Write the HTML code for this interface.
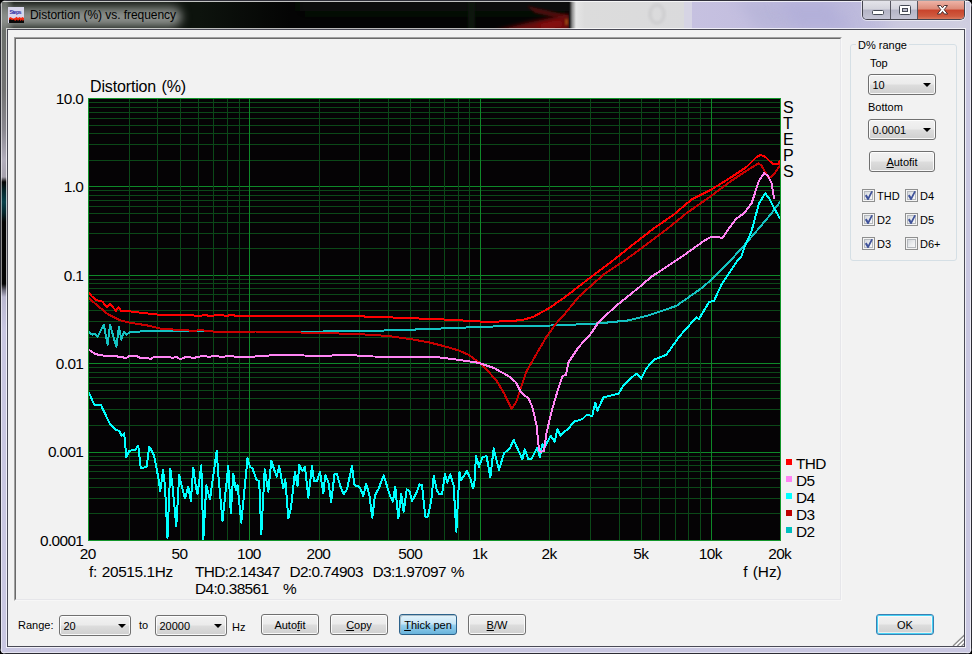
<!DOCTYPE html>
<html>
<head>
<meta charset="utf-8">
<title>Distortion (%) vs. frequency</title>
<style>
html,body{margin:0;padding:0;}
body{width:972px;height:654px;overflow:hidden;position:relative;background:#000;font-family:"Liberation Sans",Arial,sans-serif;font-size:11px;color:#000;}
#win{position:absolute;left:0;top:0;width:972px;height:654px;box-sizing:border-box;border-radius:7px 7px 6px 6px;overflow:hidden;background:#c9c7e1;}
#win div{position:absolute;box-sizing:border-box;}
/* title bar pieces */
.tglowbg{left:0;top:0;width:300px;height:30px;background:linear-gradient(90deg,#0d130d 0,#0d130d 200px,rgba(4,4,4,0) 290px);}
.tglow{left:-8px;top:6px;width:190px;height:21px;border-radius:11px;background:linear-gradient(180deg,#6e726e 0,#909490 50%,#888c88 100%);filter:blur(5px);}
.tglow2{left:0;top:0;width:14px;height:30px;background:linear-gradient(90deg,#6b6f6b 0,#6b6f6b 6px,rgba(107,111,107,0) 14px);}
.ttop{left:0;top:0;width:972px;height:2px;background:linear-gradient(180deg,#30303a 0,#30303a 1px,rgba(255,255,255,.75) 1px,rgba(255,255,255,.75) 2px);}
.lframe{left:0;top:30px;width:8px;height:624px;background:linear-gradient(180deg,#6b6f6b 0px,#727272 60px,#8a8890 100px,#b2aebc 130px,#a6a2ae 147px,#050505 152px,#05262c 161px,#07404a 172px,#05262c 183px,#050505 192px,#050505 254px,#6a6878 260px,#bab8d1 267px,#c9c7e1 300px);}
.ledge{left:0;top:0;width:2px;height:654px;background:linear-gradient(90deg,#2c2c34 0,#2c2c34 1px,rgba(255,255,255,.55) 1px);}
.redge{left:970px;top:0;width:2px;height:654px;background:linear-gradient(90deg,rgba(255,255,255,.6) 0,rgba(255,255,255,.6) 1px,#2c2c34 1px);}
.bedge{left:0;top:652px;width:972px;height:2px;background:linear-gradient(180deg,rgba(255,255,255,.5) 0,rgba(255,255,255,.5) 1px,#2c2c34 1px);}
#icon{left:8px;top:7px;width:16px;height:16px;}
#title{left:30px;top:7px;height:16px;line-height:16px;font-size:12px;white-space:nowrap;color:#000;letter-spacing:-0.05px;}
/* caption buttons */
#caps{left:862px;top:1px;width:103px;height:19px;border:1px solid #44444e;border-top:none;border-radius:0 0 5px 5px;overflow:hidden;box-shadow:0 0 0 1px rgba(255,255,255,.55);}
#caps .b{top:0;height:18px;}
.bmin{left:0;width:28px;background:linear-gradient(180deg,#e4e4ea 0,#d3d3dc 45%,#b4b4c6 50%,#c4c4d4 100%);border-right:1px solid #55555f;}
.bmax{left:28px;width:27px;background:linear-gradient(180deg,#e4e4ea 0,#d3d3dc 45%,#b4b4c6 50%,#c4c4d4 100%);border-right:1px solid #55555f;}
.bclose{left:55px;width:46px;background:linear-gradient(180deg,#eeb3a6 0,#dc8a78 45%,#c8432b 50%,#cf5a3f 85%,#d97a5e 100%);}
/* client */
#client{left:8px;top:30px;width:956px;height:616px;background:#f2f2f2;box-shadow:0 0 0 1px #4a4a56,0 0 0 2px rgba(255,255,255,.72);}
#panel{left:14px;top:37px;width:828px;height:564px;border-top:1px solid #a0a0a0;border-left:1px solid #a0a0a0;border-right:1px solid #f7f7f7;border-bottom:1px solid #f7f7f7;}
#panel i{position:absolute;left:0;top:0;right:0;bottom:0;border-top:1px solid #696969;border-left:1px solid #696969;border-right:1px solid #e6e6ea;border-bottom:1px solid #e6e6ea;}
.chart{position:absolute;left:0;top:0;}
/* controls */
.lbl{white-space:nowrap;height:14px;line-height:14px;}
.btn{border:1px solid #707070;border-radius:3px;background:linear-gradient(180deg,#f2f2f2 0,#ebebeb 48%,#dddddd 52%,#cfcfcf 100%);box-shadow:inset 0 0 0 1px rgba(255,255,255,.85);text-align:center;white-space:nowrap;}
.btn.on{border-color:#2c628b;background:linear-gradient(180deg,#e5f4fc 0,#c4e5f6 48%,#98d1ef 52%,#68b3db 100%);box-shadow:inset 1px 1px 0 0 rgba(158,176,186,.8);}
.btn.def{border-color:#3c7fb1;box-shadow:inset 0 0 0 1px #46d2f5,inset 0 0 0 2px rgba(255,255,255,.6);}
.btn u{text-decoration:underline;}
.combo{border:1px solid #707070;border-radius:3px;background:linear-gradient(180deg,#f2f2f2 0,#ebebeb 48%,#dddddd 52%,#cfcfcf 100%);box-shadow:inset 0 0 0 1px rgba(255,255,255,.85);white-space:nowrap;padding-left:3.5px;}
.combo:after{content:"";position:absolute;right:4px;top:8px;border-left:4px solid transparent;border-right:4px solid transparent;border-top:4px solid #000;}
#group{left:850px;top:44px;width:107px;height:217px;border:1px solid #d5dfe5;border-radius:3px;}
#glabel{left:856px;top:38px;padding:0 2px;background:#f2f2f2;}
.cb{width:13px;height:13px;border:1px solid #8e8f8f;background:linear-gradient(135deg,#c9cdd3 0,#eceef0 55%,#fff 100%);box-shadow:inset 0 0 0 1px #f4f4f4, inset 0 0 0 2px #b4b8bd;}
.cb svg{position:absolute;left:1px;top:1px;}
</style>
</head>
<body>
<div id="win">
  <svg class="tbg" style="position:absolute;left:0;top:0" width="972" height="30" viewBox="0 0 972 30">
    <defs>
      <filter id="bl2" x="-20%" y="-50%" width="140%" height="200%"><feGaussianBlur stdDeviation="2"/></filter>
      <filter id="bl1" x="-20%" y="-50%" width="140%" height="200%"><feGaussianBlur stdDeviation="1.2"/></filter>
      <filter id="bl6" x="-20%" y="-100%" width="140%" height="300%"><feGaussianBlur stdDeviation="7"/></filter>
      <linearGradient id="edge" x1="0" x2="1"><stop offset="0" stop-color="#050505"/><stop offset=".45" stop-color="#8c8c8c"/><stop offset="1" stop-color="#e6e6e6"/></linearGradient>
      <linearGradient id="grey" x1="0" x2="1"><stop offset="0" stop-color="#e6e6e6"/><stop offset=".08" stop-color="#dcdcdc"/><stop offset="1" stop-color="#dadadc"/></linearGradient>
      <linearGradient id="lav" x1="0" x2="1"><stop offset="0" stop-color="#c6c1e0"/><stop offset=".2" stop-color="#c3bedf"/><stop offset=".55" stop-color="#bcb9dc"/><stop offset="1" stop-color="#cccadf"/></linearGradient>
    </defs>
    <rect width="972" height="30" fill="#c9c7e1"/>
    <rect x="0" y="0" width="570" height="30" fill="#040404"/>
    <rect x="300" y="0" width="270" height="12" fill="#0b170d" filter="url(#bl6)"/>
    <rect x="468" y="2" width="7" height="28" fill="#0c160e" filter="url(#bl1)"/>
    <polygon points="527,6 568,15 568,20 535,13" fill="#4a0a0a" filter="url(#bl1)"/>
    <polygon points="494,31 530,22 569,14 570,31" fill="#6a0909" filter="url(#bl2)"/>
    <polygon points="536,25 560,20 564,26 545,29" fill="#8a1010" filter="url(#bl2)"/>
    <rect x="565" y="19" width="3" height="6" fill="#9a4a10" filter="url(#bl1)"/>
    <rect x="569" y="0" width="7" height="30" fill="url(#edge)"/>
    <rect x="576" y="0" width="108" height="30" fill="url(#grey)"/>
    <ellipse cx="657" cy="14" rx="7" ry="9" fill="none" stroke="#d0d0d2" stroke-width="4" filter="url(#bl1)"/>
    <rect x="684" y="0" width="8" height="30" fill="#d6d4e4"/>
    <rect x="692" y="0" width="280" height="30" fill="url(#lav)"/>
    <polygon points="735,0 775,0 800,30 760,30" fill="#b6b4d8" opacity=".8" filter="url(#bl6)"/>
    <polygon points="775,0 830,0 850,30 795,30" fill="#b0add8" opacity=".8" filter="url(#bl6)"/>
    <polygon points="880,20 972,20 972,30 895,30" fill="#d6d5e2" opacity=".9" filter="url(#bl6)"/>
  </svg>
  <div class="tglowbg"></div>
  <div class="tglow2"></div>
  <div class="tglow"></div>
  <div class="lframe"></div>
  <div class="ttop"></div>
  <div class="ledge"></div>
  <div class="redge"></div>
  <div class="bedge"></div>
  <div id="icon"><svg width="16" height="16" viewBox="0 0 16 16"><rect width="16" height="16" fill="#d8d6ec"/><rect x="1" y="12" width="15" height="4" fill="#0a0a0a"/><path d="M1 11L2.5 10L4 11L5.5 11.5L7 11L8.5 9.8L10 11L11.5 10L13 11L14.5 10L16 11V13L14.7 14L14 12.5L12.5 14L11.5 12.3L10 14L9 12.5L7 14L6 12.5L4 13L2.5 12.3L1 13Z" fill="#f42a10"/><text x="1.5" y="7.3" font-family="'Liberation Sans',sans-serif" font-size="5.4" font-weight="bold" fill="#2c2ca0" textLength="12">Steps</text></svg></div>
  <div id="title">Distortion (%) vs. frequency</div>
  <div id="caps">
    <div class="b bmin"><svg width="27" height="18"><rect x="9.5" y="9.5" width="11" height="4" rx="1" fill="#fff" stroke="#454a55"/></svg></div>
    <div class="b bmax"><svg width="26" height="18"><rect x="8.5" y="4.5" width="11" height="9" rx="1" fill="#fff" stroke="#454a55"/><rect x="11.5" y="7.5" width="5" height="3" fill="#b9b9c9" stroke="#454a55"/></svg></div>
    <div class="b bclose"><svg width="47" height="18"><path d="M19.5 4.5h3.2l1.8 2.3l1.8-2.3h3.2l-3.3 4.2l3.5 4.3h-3.3l-1.9-2.5l-1.9 2.5h-3.3l3.5-4.3z" fill="#fff" stroke="#4a3030" stroke-width="1" stroke-linejoin="round"/></svg></div>
  </div>
  <div id="client"></div>
  <div id="panel"><i></i></div>
<svg class="chart" width="972" height="654" viewBox="0 0 972 654">
<rect x="88" y="98" width="693" height="443" fill="#050305"/>
<path d="M88 160.5H781M88 144.5H781M88 133.5H781M88 125.5H781M88 118.5H781M88 112.5H781M88 107.5H781M88 102.5H781M88 248.5H781M88 233.5H781M88 222.5H781M88 213.5H781M88 206.5H781M88 200.5H781M88 195.5H781M88 190.5H781M88 337.5H781M88 321.5H781M88 310.5H781M88 301.5H781M88 294.5H781M88 288.5H781M88 283.5H781M88 279.5H781M88 425.5H781M88 409.5H781M88 398.5H781M88 390.5H781M88 383.5H781M88 377.5H781M88 372.5H781M88 367.5H781M88 513.5H781M88 498.5H781M88 487.5H781M88 478.5H781M88 471.5H781M88 465.5H781M88 460.5H781M88 456.5H781" stroke="#0b4818" stroke-width="1" fill="none" shape-rendering="crispEdges"/>
<path d="M88 186.5H781M88 275.5H781M88 363.5H781M88 452.5H781" stroke="#0e8828" stroke-width="1" fill="none" shape-rendering="crispEdges"/>
<path d="M129.5 98V541M157.5 98V541M180.5 98V541M198.5 98V541M213.5 98V541M227.5 98V541M239.5 98V541M319.5 98V541M359.5 98V541M388.5 98V541M410.5 98V541M429.5 98V541M444.5 98V541M458.5 98V541M469.5 98V541M549.5 98V541M590.5 98V541M619.5 98V541M641.5 98V541M659.5 98V541M675.5 98V541M688.5 98V541M700.5 98V541" stroke="#0b4818" stroke-width="1" fill="none" shape-rendering="crispEdges"/>
<path d="M249.5 98V541M480.5 98V541M711.5 98V541" stroke="#0e8828" stroke-width="1" fill="none" shape-rendering="crispEdges"/>
<rect x="88.5" y="98.5" width="692" height="442" fill="none" stroke="#12962a" stroke-width="1" shape-rendering="crispEdges"/>
<clipPath id="pc"><rect x="89" y="99" width="691" height="441"/></clipPath>
<g clip-path="url(#pc)" fill="none" stroke-width="2" stroke-linejoin="round" stroke-linecap="round" shape-rendering="crispEdges">
<polyline stroke="#14c2c2" points="88.5,332.0 92.5,334.7 95.0,333.5 97.5,336.7 103.8,324.7 107.6,344.7 110.0,324.7 116.4,347.0 118.9,326.7 121.4,339.7 123.9,332.0 126.4,334.7 130.0,332.2 147.7,331.0 200.0,331.5 323.0,331.5 368.0,331.0 410.8,329.7 461.0,327.7 496.0,326.4 523.6,326.4 566.0,325.0 598.6,323.4 628.7,320.4 648.7,315.4 676.3,305.9 701.4,288.3 711.4,279.6 729.0,262.0 741.5,248.5 756.6,231.0 771.6,213.3 780.0,202.0"/>
<polyline stroke="#c80000" points="88.5,297.0 92.0,301.0 96.0,304.2 107.7,314.2 119.3,320.0 129.3,322.5 149.3,325.8 161.0,328.7 176.0,329.7 194.3,330.8 202.7,330.0 206.0,331.2 224.3,332.0 248.0,332.0 255.5,331.5 323.0,333.0 360.6,334.2 388.2,336.0 410.8,339.2 428.3,342.2 443.4,346.0 458.4,350.3 468.4,354.8 481.0,363.6 496.0,379.9 503.6,392.4 511.6,408.7 516.0,402.4 521.0,387.4 526.0,372.3 536.0,354.8 546.2,337.2 556.2,323.4 566.0,312.5 578.5,297.0 591.0,285.8 603.6,274.5 622.4,262.0 641.2,248.5 666.3,229.6 686.4,213.3 711.4,195.8 731.5,180.7 746.5,170.7 758.4,163.4 761.6,165.7 764.5,171.0 768.3,177.2 772.0,176.4 776.6,170.7 780.0,165.0"/>
<polyline stroke="#00ffff" points="89.2,393.3 94.2,404.7 100.8,404.7 110.0,424.2 115.8,430.0 119.2,430.8 121.7,435.8 124.2,433.3 126.3,457.5 129.2,450.8 135.0,450.0 138.3,445.8 140.8,468.3 146.7,466.7 149.2,446.7 150.0,447.7 154.2,456.0 158.3,477.7 160.3,491.0 163.0,470.2 165.0,486.0 167.5,537.7 170.3,468.5 172.5,486.0 176.3,526.0 179.2,475.2 181.7,486.0 185.0,498.5 188.3,486.8 190.8,501.0 193.3,467.7 195.8,486.0 197.5,494.3 201.3,465.2 203.3,539.3 206.3,485.2 210.0,499.3 216.7,451.0 218.3,474.3 222.5,521.0 228.3,466.0 230.8,513.5 233.3,473.5 235.8,490.2 237.5,485.2 241.3,522.7 247.5,458.5 250.0,466.8 252.5,468.5 256.7,480.2 259.2,481.0 261.3,534.3 264.7,469.3 268.3,491.8 271.3,461.0 276.7,476.8 279.2,466.0 283.3,488.5 285.3,479.3 288.3,518.5 290.8,509.3 295.0,471.8 297.5,486.0 299.2,465.2 302.5,471.0 305.0,466.8 308.3,497.7 312.0,466.0 314.0,481.0 317.0,481.0 320.0,471.8 323.3,493.5 325.3,475.2 328.3,481.8 331.2,501.8 334.5,474.3 337.0,474.3 340.3,486.0 343.7,494.3 347.0,489.3 352.0,466.0 354.5,485.2 359.5,486.8 363.3,496.0 366.2,483.5 369.5,496.0 372.3,517.7 375.0,495.2 378.7,488.5 383.7,475.2 387.0,486.0 390.3,496.8 392.8,501.8 395.3,486.8 398.3,518.5 401.2,494.3 403.7,511.8 406.7,489.3 409.5,491.0 412.0,501.0 416.2,493.5 419.5,484.3 422.0,485.2 425.3,516.8 427.8,516.8 431.2,501.0 433.7,476.0 437.0,491.0 439.5,494.3 442.0,494.3 445.0,474.3 447.3,482.7 450.3,474.3 453.7,486.0 456.3,531.8 459.5,471.8 461.2,480.2 467.0,471.0 470.3,478.5 472.8,488.5 474.3,484.0 476.0,455.8 479.0,466.7 482.3,457.5 486.5,455.8 490.3,477.5 493.7,448.3 499.0,470.0 504.0,453.3 509.8,448.3 513.7,440.0 522.3,459.2 524.8,449.2 528.2,459.2 531.5,459.2 537.3,447.5 539.8,457.5 542.3,444.2 544.0,448.3 550.7,435.8 554.8,441.7 557.3,429.2 560.7,435.8 564.8,430.8 567.3,430.0 574.0,421.7 582.3,419.2 586.5,415.0 592.3,415.8 595.3,402.5 597.3,410.8 602.3,400.0 603.6,397.4 618.7,393.6 623.7,384.9 636.2,373.6 641.2,378.6 646.2,368.6 653.8,359.8 666.3,354.8 678.8,337.2 696.4,317.2 698.9,319.2 709.0,302.0 714.0,300.9 721.5,284.6 736.5,262.0 741.5,256.0 744.0,248.5 751.6,231.0 759.0,203.3 765.3,193.3 769.1,198.3 774.1,208.3 780.0,218.4"/>
<polyline stroke="#ff84f4" points="88.5,349.5 92.0,352.0 96.0,354.2 104.3,355.8 121.0,356.7 126.0,358.3 129.3,355.8 136.0,355.8 139.3,357.5 151.0,358.7 154.3,356.7 169.3,357.0 172.7,358.0 176.0,356.7 180.2,359.2 186.0,357.0 194.3,357.8 202.7,355.8 209.3,357.0 212.7,355.8 222.7,357.0 227.7,355.8 236.0,356.7 248.0,357.0 255.5,356.5 278.0,354.8 323.0,356.0 345.6,354.8 373.2,356.5 405.7,356.8 438.3,357.3 458.4,359.8 478.5,362.8 493.5,367.8 508.6,376.1 516.0,382.4 521.0,392.4 528.6,398.7 532.3,406.7 536.5,425.0 539.0,450.0 540.7,452.0 544.0,450.8 546.5,433.3 550.7,415.0 554.8,400.0 558.7,387.4 562.5,376.0 566.0,374.8 568.5,362.3 578.5,347.3 591.0,333.5 598.6,322.2 616.0,305.9 641.0,285.8 651.0,277.0 673.8,262.0 686.4,253.5 703.9,240.9 711.4,236.7 722.7,237.7 729.0,228.4 736.5,218.4 744.0,213.3 751.6,203.3 759.0,180.7 764.0,173.2 767.9,175.7 771.6,183.3 774.0,198.3"/>
<polyline stroke="#ff0000" points="88.5,292.5 92.0,296.5 96.0,300.0 102.7,301.7 106.8,307.5 110.2,304.2 116.0,310.8 118.5,307.5 121.0,310.8 129.3,311.3 139.3,312.5 161.0,315.0 192.7,315.0 196.0,316.2 206.0,315.0 209.3,316.2 217.7,315.0 227.7,315.8 230.2,314.7 236.0,315.8 248.0,315.8 323.0,315.9 355.6,316.2 398.2,317.7 448.4,319.7 483.5,321.7 508.6,321.4 523.6,319.7 533.6,316.7 548.7,308.4 566.0,296.3 591.0,277.0 611.0,262.0 631.2,246.0 653.8,228.4 673.8,214.6 691.4,199.6 711.4,189.5 731.5,177.0 746.5,167.0 756.6,156.9 760.6,155.0 765.3,156.9 772.9,164.2 777.9,164.4 780.0,161.0"/>
</g>
<g font-family="'Liberation Sans', Arial, sans-serif" fill="#000" letter-spacing="-0.62" word-spacing="1.2">
<text x="90" y="91.7" font-size="16" letter-spacing="-0.15">Distortion (%)</text>
<text x="83.3" y="103.8" font-size="15.4" text-anchor="end">10.0</text>
<text x="83.3" y="192.2" font-size="15.4" text-anchor="end">1.0</text>
<text x="83.3" y="280.6" font-size="15.4" text-anchor="end">0.1</text>
<text x="83.3" y="369.0" font-size="15.4" text-anchor="end">0.01</text>
<text x="83.3" y="457.4" font-size="15.4" text-anchor="end">0.001</text>
<text x="83.3" y="545.8" font-size="15.4" text-anchor="end">0.0001</text>
<text x="87.7" y="559" font-size="15.4" text-anchor="middle">20</text>
<text x="179.5" y="559" font-size="15.4" text-anchor="middle">50</text>
<text x="248.9" y="559" font-size="15.4" text-anchor="middle">100</text>
<text x="318.4" y="559" font-size="15.4" text-anchor="middle">200</text>
<text x="410.2" y="559" font-size="15.4" text-anchor="middle">500</text>
<text x="479.6" y="559" font-size="15.4" text-anchor="middle">1k</text>
<text x="549.0" y="559" font-size="15.4" text-anchor="middle">2k</text>
<text x="640.8" y="559" font-size="15.4" text-anchor="middle">5k</text>
<text x="710.3" y="559" font-size="15.4" text-anchor="middle">10k</text>
<text x="779.7" y="559" font-size="15.4" text-anchor="middle">20k</text>
<text x="89" y="576.7" font-size="15.4" letter-spacing="-0.4">f: 20515.1Hz</text>
<text x="195" y="576.7" font-size="15.4" xml:space="preserve">THD:2.14347  D2:0.74903  D3:1.97097 %</text>
<text x="195" y="593.5" font-size="15.4" xml:space="preserve">D4:0.38561   %</text>
<text x="743.3" y="576.7" font-size="15.4" letter-spacing="-0.1">f (Hz)</text>
<rect x="786" y="459" width="6" height="6" fill="#ff0000"/>
<text x="796" y="468.7" font-size="15.4">THD</text>
<rect x="786" y="476" width="6" height="6" fill="#ff84f4"/>
<text x="796" y="485.7" font-size="15.4">D5</text>
<rect x="786" y="493" width="6" height="6" fill="#00ffff"/>
<text x="796" y="502.7" font-size="15.4">D4</text>
<rect x="786" y="510" width="6" height="6" fill="#c00000"/>
<text x="796" y="519.7" font-size="15.4">D3</text>
<rect x="786" y="527" width="6" height="6" fill="#00bebe"/>
<text x="796" y="536.7" font-size="15.4">D2</text>
</g>
</svg>
  <div id="steps" style="left:783px;top:99.5px;width:12px;font-size:16px;line-height:16px;word-break:break-all;overflow-wrap:anywhere;white-space:normal;">STEPS</div>
  <div id="group"></div>
  <div id="glabel" class="lbl">D% range</div>
  <div class="lbl" style="left:870px;top:56px;">Top</div>
  <div class="combo" style="left:868px;top:74px;width:68px;height:21px;line-height:20px;">10</div>
  <div class="lbl" style="left:868px;top:100px;">Bottom</div>
  <div class="combo" style="left:868px;top:119px;width:68px;height:21px;line-height:20px;">0.0001</div>
  <div class="btn" style="left:869px;top:151px;width:66px;height:21px;line-height:20.5px;"><u>A</u>utofit</div>

  <div class="cb" style="left:862px;top:189px;"><svg width="11" height="11"><path d="M0.9 4.7L2.7 3.5L4.1 5.9L7.3 0L8.9 0.5L4.6 8.9H3.5Z" fill="#40539a"/></svg></div>
  <div class="lbl" style="left:877px;top:189px;">THD</div>
  <div class="cb" style="left:905px;top:189px;"><svg width="11" height="11"><path d="M0.9 4.7L2.7 3.5L4.1 5.9L7.3 0L8.9 0.5L4.6 8.9H3.5Z" fill="#40539a"/></svg></div>
  <div class="lbl" style="left:920px;top:189px;">D4</div>
  <div class="cb" style="left:862px;top:213px;"><svg width="11" height="11"><path d="M0.9 4.7L2.7 3.5L4.1 5.9L7.3 0L8.9 0.5L4.6 8.9H3.5Z" fill="#40539a"/></svg></div>
  <div class="lbl" style="left:877px;top:213px;">D2</div>
  <div class="cb" style="left:905px;top:213px;"><svg width="11" height="11"><path d="M0.9 4.7L2.7 3.5L4.1 5.9L7.3 0L8.9 0.5L4.6 8.9H3.5Z" fill="#40539a"/></svg></div>
  <div class="lbl" style="left:920px;top:213px;">D5</div>
  <div class="cb" style="left:862px;top:237px;"><svg width="11" height="11"><path d="M0.9 4.7L2.7 3.5L4.1 5.9L7.3 0L8.9 0.5L4.6 8.9H3.5Z" fill="#40539a"/></svg></div>
  <div class="lbl" style="left:877px;top:237px;">D3</div>
  <div class="cb" style="left:905px;top:237px;"></div>
  <div class="lbl" style="left:920px;top:237px;">D6+</div>

  <div class="lbl" style="left:18px;top:618px;">Range:</div>
  <div class="combo" style="left:59px;top:615px;width:72px;height:21px;line-height:20px;">20</div>
  <div class="lbl" style="left:139px;top:618px;">to</div>
  <div class="combo" style="left:155px;top:615px;width:72px;height:21px;line-height:20px;">20000</div>
  <div class="lbl" style="left:232px;top:620px;">Hz</div>
  <div class="btn" style="left:261px;top:614px;width:58px;height:21px;line-height:20.5px;">Auto<u>f</u>it</div>
  <div class="btn" style="left:330px;top:614px;width:58px;height:21px;line-height:20.5px;"><u>C</u>opy</div>
  <div class="btn on" style="left:399px;top:614px;width:58px;height:21px;line-height:20.5px;"><u>T</u>hick pen</div>
  <div class="btn" style="left:468px;top:614px;width:58px;height:21px;line-height:20.5px;"><u>B</u>/W</div>
  <div class="btn def" style="left:876px;top:614px;width:58px;height:21px;line-height:20.5px;">OK</div>
  <div id="grip" style="left:951px;top:633px;width:13px;height:13px;overflow:hidden;"><svg width="13" height="13"><path d="M3.6 13L13.5 3.5M8 13L13.5 7.7M12.2 13L13.5 11.8" stroke="#fff" stroke-width="1.6"/><path d="M2 13L13.5 2M6.4 13L13.5 6.2M10.7 13L13.5 10.3" stroke="#8c8c8c" stroke-width="1.3"/></svg></div>
</div>
</body>
</html>
